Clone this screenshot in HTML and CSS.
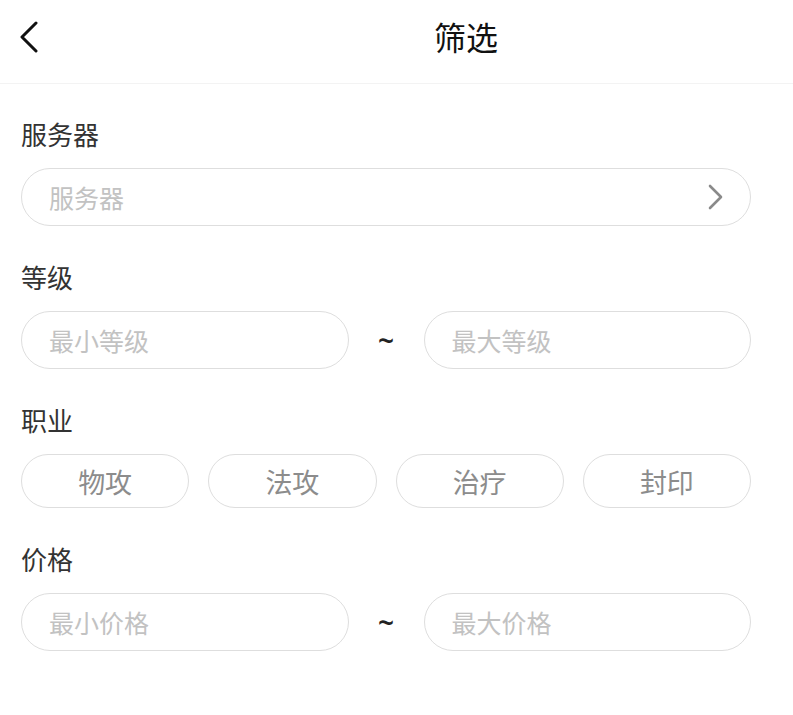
FILE: index.html
```html
<!DOCTYPE html>
<html lang="zh-CN">
<head>
<meta charset="utf-8">
<title>筛选</title>
<link rel="stylesheet" href="styles.css">
</head>
<body>
<header class="header">
  <div class="back">
    <svg width="20" height="34" viewBox="0 0 20 34"><polyline points="16,2 2,16 16,30" fill="none" stroke="#111" stroke-width="3" stroke-linecap="round" stroke-linejoin="round"/></svg>
  </div>
  <h1 class="title">筛选</h1>
</header>
<main class="content">
  <section class="section">
    <div class="label">服务器</div>
    <div class="field field-select">
      <span class="placeholder">服务器</span>
      <svg class="chevron" width="16" height="26" viewBox="0 0 16 26"><polyline points="2,2 13,13 2,24" fill="none" stroke="#8a8a8a" stroke-width="2.6" stroke-linecap="round" stroke-linejoin="round"/></svg>
    </div>
  </section>
  <section class="section">
    <div class="label">等级</div>
    <div class="range">
      <div class="field"><span class="placeholder">最小等级</span></div>
      <div class="sep">~</div>
      <div class="field"><span class="placeholder">最大等级</span></div>
    </div>
  </section>
  <section class="section">
    <div class="label">职业</div>
    <div class="chips">
      <div class="chip">物攻</div>
      <div class="chip">法攻</div>
      <div class="chip">治疗</div>
      <div class="chip">封印</div>
    </div>
  </section>
  <section class="section">
    <div class="label">价格</div>
    <div class="range">
      <div class="field"><span class="placeholder">最小价格</span></div>
      <div class="sep">~</div>
      <div class="field"><span class="placeholder">最大价格</span></div>
    </div>
  </section>
</main>
</body>
</html>
```
FILE: styles.css
```css
* { box-sizing: border-box; }
html, body {
  margin: 0;
  padding: 0;
  background: #fff;
  font-family: "Noto Sans CJK SC", "Noto Sans", sans-serif;
}
.header {
  height: 84px;
  border-bottom: 1px solid #f3f3f3;
  display: flex;
  align-items: center;
  padding-left: 20px;
}
.back {
  width: 20px;
  height: 34px;
  display: flex;
  margin-top: -8px;
}
.title {
  margin: -12px 0 0 394px;
  font-size: 32px;
  font-weight: 400;
  color: #111;
  line-height: 40px;
}
.content {
  padding: 32px 42px 0 21px;
  display: flex;
  flex-direction: column;
  gap: 33px;
}
.label {
  font-size: 26px;
  line-height: 36px;
  color: #333;
  margin-bottom: 16px;
}
.field {
  height: 58px;
  border: 1px solid #dedede;
  border-radius: 29px;
  display: flex;
  align-items: center;
  padding: 0 26px 0 27px;
  flex: 1;
}
.field-select {
  justify-content: space-between;
}
.placeholder {
  font-size: 25px;
  color: #c2c2c2;
  line-height: 30px;
}
.chevron { display: block; }
.range {
  display: flex;
  align-items: center;
}
.sep {
  width: 75px;
  text-align: center;
  font-size: 28px;
  font-weight: 600;
  color: #222;
  font-family: "Noto Sans", sans-serif;
}
.chips {
  display: grid;
  grid-template-columns: repeat(4, 1fr);
  gap: 19px;
}
.chip {
  height: 54px;
  border: 1px solid #dedede;
  border-radius: 27px;
  display: flex;
  align-items: center;
  justify-content: center;
  font-size: 27px;
  color: #8c8c8c;
}
```
